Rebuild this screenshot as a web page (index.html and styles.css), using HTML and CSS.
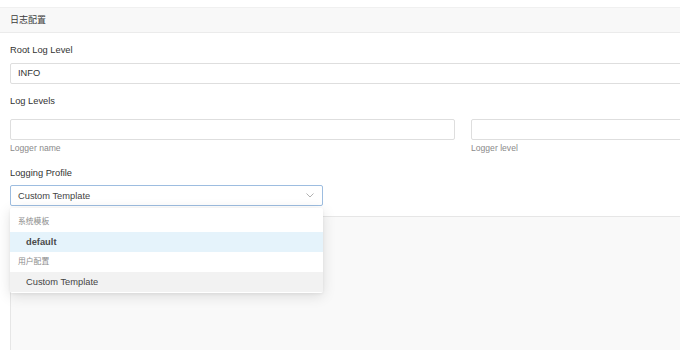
FILE: index.html
```html
<!DOCTYPE html>
<html lang="zh-CN">
<head>
    <meta charset="UTF-8">
    <meta name="viewport" content="width=device-width, initial-scale=1.0">
    <title>日志配置</title>
    <link rel="stylesheet" href="styles.css">
</head>
<body>
    <div class="panel">
        <div class="panel-head">日志配置</div>
        <div class="panel-body">
            <div class="field">
                <label class="field-label">Root Log Level</label>
                <div class="input input-wide">INFO</div>
            </div>

            <div class="field">
                <label class="field-label levels-label">Log Levels</label>
                <div class="level-row">
                    <div class="level-col">
                        <div class="input"></div>
                        <span class="hint">Logger name</span>
                    </div>
                    <div class="level-col">
                        <div class="input"></div>
                        <span class="hint">Logger level</span>
                    </div>
                </div>
            </div>

            <div class="field profile-field">
                <label class="field-label">Logging Profile</label>
                <div class="select-wrap">
                    <div class="select">
                        <span>Custom Template</span>
                        <svg class="chevron" width="8" height="5" viewBox="0 0 8 5">
                            <path d="M0.5 0.5 L4 4 L7.5 0.5" fill="none" stroke="#a8a8a8" stroke-width="0.9"/>
                        </svg>
                    </div>
                    <div class="dropdown">
                        <div class="group-title">系统模板</div>
                        <div class="option option-active">default</div>
                        <div class="group-title">用户配置</div>
                        <div class="option option-hover">Custom Template</div>
                    </div>
                </div>
                <div class="editor"></div>
            </div>
        </div>
    </div>
</body>
</html>
```

FILE: styles.css
```css
html, body {
    height: 100%;
}
body {
    margin: 0;
    overflow: hidden;
    background: #fff;
    font-family: "Liberation Sans", Arial, "Noto Sans CJK SC", sans-serif;
    color: #333;
}
.panel {
    width: 100%;
    height: calc(100% - 7px);
    overflow: hidden;
    margin-top: 7px;
    border-top: 1px solid #f0f0f0;
    box-sizing: border-box;
}
.panel-head {
    width: 930px;
    height: 24px;
    line-height: 24px;
    padding-left: 10px;
    font-size: 9px;
    background-color: #f8f8f8;
    border-bottom: 1px solid #ebebeb;
    color: #3c3c3c;
}
.panel-body {
    width: 930px;
    padding: 11px 0 0 10px;
}
.field {
    display: flex;
    flex-direction: column;
}
.field-label {
    font-size: 9.3px;
    line-height: 12px;
    margin-bottom: 7px;
    color: #333;
}
.levels-label {
    margin-top: 11px;
    margin-bottom: 12px;
}
.input {
    height: 19px;
    line-height: 19px;
    border: 1px solid #dedede;
    border-radius: 2px;
    padding-left: 7px;
    font-size: 9.3px;
    color: #333;
}
.level-row {
    display: flex;
    gap: 16px;
}
.level-col {
    display: flex;
    flex-direction: column;
    width: 445px;
}
.level-col .input {
    padding-left: 0;
}
.hint {
    font-size: 8.6px;
    line-height: 12px;
    margin-top: 2px;
    color: #8a8a8a;
}
.profile-field {
    margin-top: 13px;
}
.profile-field .field-label {
    margin-bottom: 6px;
}
.select-wrap {
    position: relative;
    width: 313px;
    z-index: 2;
}
.select {
    display: flex;
    align-items: center;
    justify-content: space-between;
    height: 19px;
    border: 1px solid #9dbde0;
    border-radius: 2px;
    padding: 0 7px;
    font-size: 9.3px;
    color: #444;
}
.chevron {
    margin-right: 1px;
}
.dropdown {
    position: absolute;
    top: 23px;
    left: 0;
    right: 0;
    background: #fff;
    padding: 4px 0 1px;
    border-radius: 2px;
    box-shadow: 0 3px 14px rgba(0, 0, 0, 0.12), 0 1px 3px rgba(0, 0, 0, 0.06);
}
.group-title {
    height: 20px;
    line-height: 20px;
    padding-left: 8px;
    font-size: 7.8px;
    color: #8c8c8c;
}
.option {
    height: 20px;
    line-height: 20px;
    padding-left: 16px;
    font-size: 9.3px;
    color: #444;
}
.option-active {
    background-color: #e5f3fb;
    font-weight: bold;
    color: #4a4a4a;
}
.option-hover {
    background-color: #f2f2f2;
}
.editor {
    margin-top: 10px;
    height: 200px;
    background-color: #f9f9f9;
    border: 1px solid #e6e6e6;
}
```
